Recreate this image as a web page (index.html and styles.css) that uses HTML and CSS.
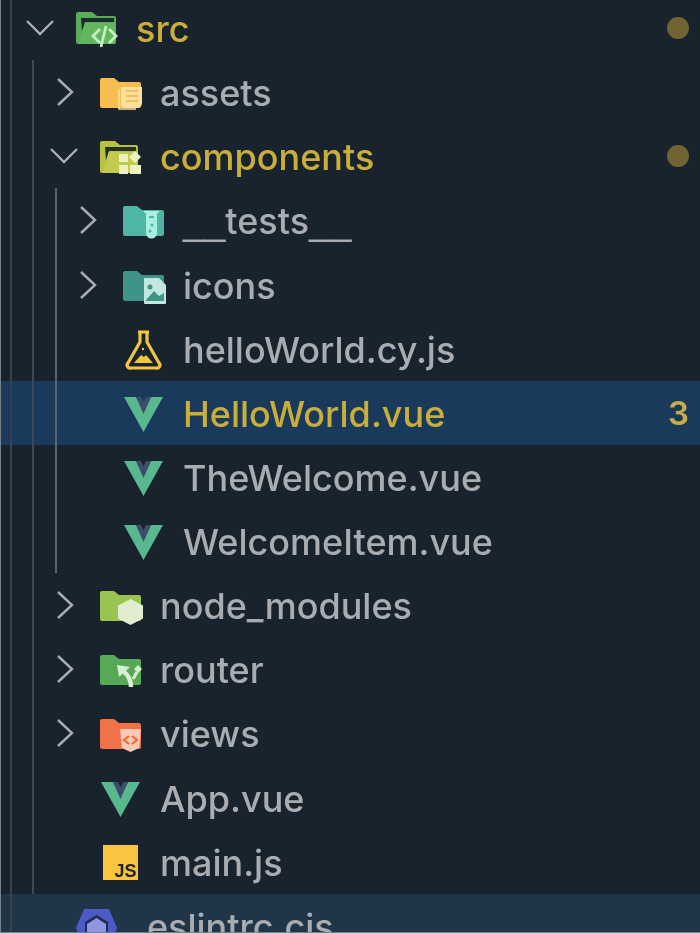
FILE: index.html
```html
<!DOCTYPE html>
<html lang="en">
<head>
  <meta charset="UTF-8">
  <title>Explorer</title>
  <link rel="stylesheet" href="styles.css">
</head>
<body>
  <svg class="defs" width="0" height="0">
    <symbol id="vue" viewBox="0 0 44 44">
      <polygon points="1,6 13,6 20.5,20 28,6 40,6 20.5,41" fill="#58b98c"/>
      <polygon points="13,6 18,6 20.5,11 23,6 28,6 20.5,23" fill="#3d4c6c"/>
    </symbol>
    <symbol id="folder" viewBox="0 0 44 44">
      <path d="M2 8h12l5 4h20a2 2 0 0 1 2 2v22a2 2 0 0 1-2 2H2a2 2 0 0 1-2-2V10a2 2 0 0 1 2-2z"/>
    </symbol>
  </svg>

  <ul class="tree">
    <li class="row depth-0 changed">
      <svg class="chevron" viewBox="0 0 28 28"><path d="M1 7l13 13L27 7"/></svg>
      <svg class="icon" viewBox="0 0 44 44">
        <path d="M2 6h14l5 4h17a2 2 0 0 1 2 2v24a2 2 0 0 1-2 2H2a2 2 0 0 1-2-2V8a2 2 0 0 1 2-2z" fill="#58ad58"/>
        <path d="M5 12h33v4H9l-3 9z" fill="#1c2b30"/>
        <path d="M9 17h30v21H3z" fill="#62b65e"/>
        <path d="M24 23l-7 7 7 7M33 23l7 7-7 7M30 20l-5 21" fill="none" stroke="#c9eec2" stroke-width="2.8"/>
      </svg>
      <span class="name">src</span>
      <span class="dot"></span>
    </li>
    <li>
      <ul class="children">
        <li class="row depth-1">
          <svg class="chevron" viewBox="0 0 28 28"><path d="M8 1l14 13L8 27"/></svg>
          <svg class="icon folder-assets" viewBox="0 0 44 44">
            <use href="#folder"/>
            <path d="M21 17h21v16a5 5 0 0 1-5 5H24a3 3 0 0 1-3-3z" fill="#fde0a0"/>
            <path d="M19 19v20h17" fill="none" stroke="#fde0a0" stroke-width="1.5"/>
            <path d="M26 21h12M26 26h12M26 31h12" stroke="#f8bd4f" stroke-width="2"/>
          </svg>
          <span class="name">assets</span>
        </li>
        <li class="row depth-1 changed">
          <svg class="chevron" viewBox="0 0 28 28"><path d="M1 7l13 13L27 7"/></svg>
          <svg class="icon" viewBox="0 0 44 44">
            <path d="M2 7h13l5 4h16a2 2 0 0 1 2 2v24a2 2 0 0 1-2 2H2a2 2 0 0 1-2-2V9a2 2 0 0 1 2-2z" fill="#b7c240"/>
            <path d="M5 13h31v4H9l-3 9z" fill="#232f2a"/>
            <path d="M9 18h29v21H3z" fill="#c2cb4e"/>
            <path d="M19 20h9v8h-9zM19 31h9v9h-9zM30 31h11v9H30z" fill="#eef1c0"/>
            <path d="M35 17l6 6-6 6-6-6z" fill="#eef1c0"/>
          </svg>
          <span class="name">components</span>
          <span class="dot"></span>
        </li>
        <li>
          <ul class="children nested">
            <li class="row depth-2">
              <svg class="chevron" viewBox="0 0 28 28"><path d="M8 1l14 13L8 27"/></svg>
              <svg class="icon folder-tests" viewBox="0 0 44 44">
                <use href="#folder"/>
                <path d="M23 15h11v20a5.500 5.500 0 0 1-11 0z" fill="#a9f0e0"/>
                <path d="M21 14h15" stroke="#a9f0e0" stroke-width="2"/>
                <path d="M26 19h5" stroke="#4db6a5" stroke-width="2"/>
                <circle cx="29" cy="27" r="1.600" fill="#4db6a5"/>
                <circle cx="27" cy="33" r="1.600" fill="#4db6a5"/>
              </svg>
              <span class="name"><span class="under">__</span>tests<span class="under">__</span></span>
            </li>
            <li class="row depth-2">
              <svg class="chevron" viewBox="0 0 28 28"><path d="M8 1l14 13L8 27"/></svg>
              <svg class="icon folder-icons" viewBox="0 0 44 44">
                <use href="#folder"/>
                <path d="M22 15h14l7 7v18a1 1 0 0 1-1 1H22a1 1 0 0 1-1-1V16a1 1 0 0 1 1-1z" fill="#c4e8df"/>
                <circle cx="27" cy="24" r="2.500" fill="#3f9488"/>
                <path d="M23 37l8-9 5 5 5-3v8H23z" fill="#3f9488"/>
              </svg>
              <span class="name">icons</span>
            </li>
            <li class="row depth-2">
              <span class="chevron"></span>
              <svg class="icon" viewBox="0 0 44 44">
                <path d="M15 5h11M17 5v10L5 36a3 3 0 0 0 3 5h25a3 3 0 0 0 3-5L24 15V5" fill="none" stroke="#f3c63f" stroke-width="3.200" stroke-linejoin="round"/>
                <path d="M11 36l7-8 3 2 2-2 7 8z" fill="#f3c63f"/>
                <circle cx="20" cy="22" r="1.200" fill="#f3c63f"/>
              </svg>
              <span class="name">helloWorld.cy.js</span>
            </li>
            <li class="row depth-2 selected changed">
              <span class="chevron"></span>
              <svg class="icon"><use href="#vue"/></svg>
              <span class="name">HelloWorld.vue</span>
              <span class="count">3</span>
            </li>
            <li class="row depth-2">
              <span class="chevron"></span>
              <svg class="icon"><use href="#vue"/></svg>
              <span class="name">TheWelcome.vue</span>
            </li>
            <li class="row depth-2">
              <span class="chevron"></span>
              <svg class="icon"><use href="#vue"/></svg>
              <span class="name">WelcomeItem.vue</span>
            </li>
          </ul>
        </li>
        <li class="row depth-1">
          <svg class="chevron" viewBox="0 0 28 28"><path d="M8 1l14 13L8 27"/></svg>
          <svg class="icon folder-node" viewBox="0 0 44 44">
            <use href="#folder"/>
            <path d="M30.500 16l12.500 6.500v13L30.500 42 18 35.500v-13z" fill="#e0edcf"/>
          </svg>
          <span class="name">node_modules</span>
        </li>
        <li class="row depth-1">
          <svg class="chevron" viewBox="0 0 28 28"><path d="M8 1l14 13L8 27"/></svg>
          <svg class="icon folder-router" viewBox="0 0 44 44">
            <use href="#folder"/>
            <path d="M23 24q8 6 8 16" fill="none" stroke="#d8f0d0" stroke-width="4.500"/>
            <path d="M17 18l13 2-11 10z" fill="#d8f0d0"/>
            <path d="M33 32l4-7" stroke="#d8f0d0" stroke-width="3"/>
            <path d="M38 18l4 4-4 4-4-4z" fill="#d8f0d0"/>
          </svg>
          <span class="name">router</span>
        </li>
        <li class="row depth-1">
          <svg class="chevron" viewBox="0 0 28 28"><path d="M8 1l14 13L8 27"/></svg>
          <svg class="icon folder-views" viewBox="0 0 44 44">
            <use href="#folder"/>
            <path d="M20 18h21l-2 19-8.500 4-8.500-4z" fill="#fcc9b5"/>
            <path d="M29 25l-5 4 5 4M32 25l5 4-5 4" fill="none" stroke="#f0623a" stroke-width="2"/>
          </svg>
          <span class="name">views</span>
        </li>
        <li class="row depth-1">
          <span class="chevron"></span>
          <svg class="icon"><use href="#vue"/></svg>
          <span class="name">App.vue</span>
        </li>
        <li class="row depth-1">
          <span class="chevron"></span>
          <svg class="icon" viewBox="0 0 44 44">
            <rect x="3" y="5" width="35" height="35" fill="#f9c440"/>
            <text class="js-mark" x="36.500" y="37" text-anchor="end">JS</text>
          </svg>
          <span class="name">main.js</span>
        </li>
      </ul>
    </li>
    <li class="row depth-0 hovered">
      <span class="chevron"></span>
      <svg class="icon" viewBox="0 0 44 44">
        <path d="M8 5h25l8 19-8 19H8L0 24z" fill="#4a5bc8"/>
        <path d="M20.500 11L32 18v18l-11.500 7L9 36V18z" fill="#1d2d4d"/>
        <path d="M20.500 14l9.500 6v14l-9.500 6-9.500-6V20z" fill="#8f95e0"/>
      </svg>
      <span class="name">.eslintrc.cjs</span>
    </li>
  </ul>
</body>
</html>
```

FILE: styles.css
```css
html, body {
  height: 933px;
  margin: 0;
  overflow: hidden;
}

body {
  position: relative;
  background-color: #19232e;
  font-family: Inter, 'Liberation Sans', sans-serif;
  color: #a9adb2;
}

/* Thin light edges of the window */
body::before,
body::after {
  content: "";
  position: absolute;
  left: 0;
  z-index: 2;
  background-color: #77808a;
}

body::before {
  top: 0;
  bottom: 0;
  width: 1px;
}

body::after {
  right: 0;
  bottom: 0;
  height: 1px;
}

.defs {
  display: block;
  height: 0;
}

ul {
  list-style: none;
  margin: 0;
  padding: 0;
  position: relative;
}

/* Tree starts a little above the window, as it was scrolled */
.tree {
  margin-top: -4px;
  filter: blur(0.5px);
}

/* Indent guides */
.tree::before,
.children::before {
  content: "";
  position: absolute;
  top: 0;
  bottom: 0;
  width: 2px;
  z-index: 1;
}

.tree::before {
  left: 10px;
  background-color: #36424e;
}

.children::before {
  left: 32px;
  background-color: #3d4954;
}

.children.nested::before {
  left: 55px;
  background-color: #5a646e;
}

.row {
  display: flex;
  align-items: center;
  height: 64.14px;
  padding-right: 11px;
  box-sizing: border-box;
  font-size: 36px;
  font-weight: 500;
}

.depth-0 { padding-left: 26px; }
.depth-1 { padding-left: 50px; }
.depth-2 { padding-left: 73px; }

.chevron {
  flex: none;
  width: 28px;
  height: 28px;
  margin-right: 22px;
  fill: none;
  stroke: #a9adb2;
  stroke-width: 2.4;
}

.icon {
  flex: none;
  width: 44px;
  height: 44px;
  margin-right: 16px;
  overflow: visible;
}

.name {
  white-space: nowrap;
  line-height: 1;
  padding-top: 2px;
}

.under {
  font-family: 'Liberation Sans', sans-serif;
  font-size: 38px;
}

.changed .name {
  color: #c9ae3a;
}

.selected {
  background-color: #1a3a5c;
}

.hovered {
  background-color: #213549;
}

.dot {
  margin-left: auto;
  width: 22px;
  height: 22px;
  border-radius: 50%;
  background-color: #6f6432;
}

.count {
  margin-left: auto;
  font-size: 33px;
  font-weight: 600;
  color: #c8ad4a;
}

.folder-assets { fill: #f8bd4f; }
.folder-tests { fill: #4db6a5; }
.folder-icons { fill: #3f9488; }
.folder-node { fill: #98c44f; }
.folder-router { fill: #57a857; }
.folder-views { fill: #f07248; }

.js-mark {
  font-family: 'Liberation Sans', sans-serif;
  font-size: 18px;
  font-weight: bold;
  fill: #23262b;
}
```
